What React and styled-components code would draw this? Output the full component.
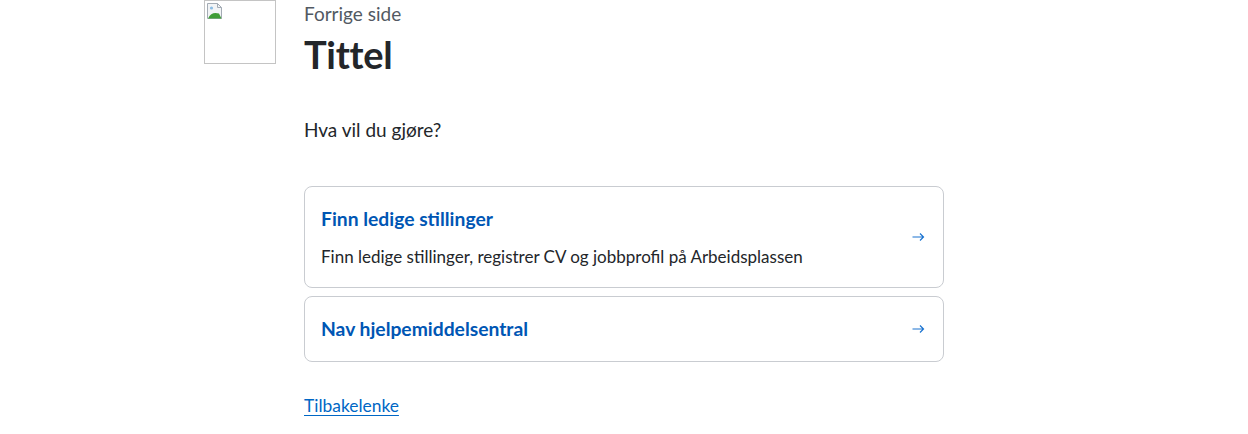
import styled, { createGlobalStyle } from "styled-components";

const GlobalStyle = createGlobalStyle`
  body {
    margin: 0;
    background: #ffffff;
    font-family: "Lato", "Noto Sans", sans-serif;
    color: #23262a;
  }
`;

const links = [
  {
    title: "Finn ledige stillinger",
    description: "Finn ledige stillinger, registrer CV og jobbprofil på Arbeidsplassen",
  },
  { title: "Nav hjelpemiddelsentral" },
];

const BrokenImage = () => (
  <ImageBox>
    <svg width="18" height="18" viewBox="0 0 18 18">
      <path d="M1.5 1.5h10l4 4v11h-14z" fill="#f2f4f6" stroke="#a3abb4" />
      <path d="M11.5 1.5v4h4" fill="none" stroke="#a3abb4" />
      <path d="M2 16.5c2.5-5 6-6.5 11-5l2.5 5z" fill="#3f9d37" />
      <circle cx="5.5" cy="6" r="1.6" fill="#8cbde4" />
    </svg>
  </ImageBox>
);

const Arrow = () => (
  <ArrowIcon width="16" height="16" viewBox="0 0 16 16" fill="none">
    <path d="M1.5 8h11.5M9 4.5 12.5 8 9 11.5" stroke="currentColor" strokeWidth="1.2" />
  </ArrowIcon>
);

const App = () => {
  return (
    <>
      <GlobalStyle />
      <Page>
        <BrokenImage />
        <Main>
          <Header>
            <Previous>Forrige side</Previous>
            <Title>Tittel</Title>
          </Header>
          <Intro>Hva vil du gjøre?</Intro>
          <Panels>
            {links.map((item) => (
              <Panel key={item.title} href="#">
                <PanelText>
                  <PanelTitle>{item.title}</PanelTitle>
                  {item.description && <PanelDescription>{item.description}</PanelDescription>}
                </PanelText>
                <Arrow />
              </Panel>
            ))}
          </Panels>
          <BackLink href="#">Tilbakelenke</BackLink>
        </Main>
      </Page>
    </>
  );
};

const Page = styled.div`
  width: 840px;
  margin: 0 auto;
  display: grid;
  grid-template-columns: 72px 640px;
  column-gap: 28px;
  align-items: start;
`;

const ImageBox = styled.div`
  box-sizing: border-box;
  width: 72px;
  height: 64px;
  border: 1px solid #c4c4c4;
  padding: 1px 0 0 1px;
  svg {
    display: block;
  }
`;

const Main = styled.main`
  display: flex;
  flex-direction: column;
  align-items: flex-start;
`;

const Header = styled.div`
  display: flex;
  flex-direction: column;
`;

const Previous = styled.span`
  font-size: 19px;
  line-height: 28px;
  color: #525962;
`;

const Title = styled.h1`
  margin: 0;
  font-size: 38px;
  line-height: 52px;
  font-weight: 700;
  color: #23262a;
  letter-spacing: -0.3px;
`;

const Intro = styled.p`
  margin: 34px 0 0;
  font-size: 19px;
  line-height: 32px;
`;

const Panels = styled.div`
  margin-top: 40px;
  width: 100%;
  display: flex;
  flex-direction: column;
  gap: 8px;
`;

const Panel = styled.a`
  display: flex;
  align-items: center;
  justify-content: space-between;
  padding: 16px;
  border: 1px solid #c9ccd1;
  border-radius: 8px;
  text-decoration: none;
  color: #0067c5;
  background: #ffffff;
`;

const PanelText = styled.div`
  display: flex;
  flex-direction: column;
  gap: 8px;
`;

const PanelTitle = styled.span`
  font-size: 19.3px;
  line-height: 32px;
  font-weight: 700;
  color: #0056b4;
`;

const PanelDescription = styled.span`
  font-size: 17px;
  line-height: 28px;
  color: #23262a;
`;

const ArrowIcon = styled.svg`
  flex-shrink: 0;
  color: #1a73d0;
`;

const BackLink = styled.a`
  margin-top: 32px;
  font-size: 17.4px;
  line-height: 24px;
  color: #0067c5;
  text-decoration: underline;
  text-underline-offset: 3px;
`;

export default App;
